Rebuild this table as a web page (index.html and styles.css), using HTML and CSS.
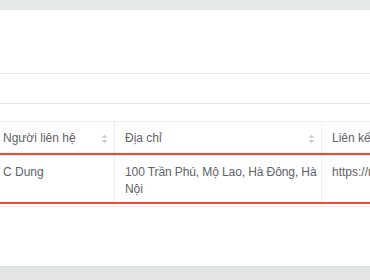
FILE: index.html
```html
<!DOCTYPE html>
<html lang="vi">
<head>
<meta charset="utf-8">
<link rel="stylesheet" href="styles.css">
</head>
<body>
<div class="page">
  <div class="topbar"></div>
  <div class="panel panel-tools"></div>
  <div class="panel panel-filter"></div>
  <div class="spacer"></div>
  <div class="table-wrap">
    <div class="grid">
      <div class="cell head first"><span>Người liên hệ</span><svg class="sort" width="7" height="10" viewBox="0 0 7 10"><path d="M0.5 4 L3.5 0.6 L6.5 4 Z"/><path d="M0.5 6 L3.5 9.4 L6.5 6 Z"/></svg></div>
      <div class="cell head"><span>Địa chỉ</span><svg class="sort" width="7" height="10" viewBox="0 0 7 10"><path d="M0.5 4 L3.5 0.6 L6.5 4 Z"/><path d="M0.5 6 L3.5 9.4 L6.5 6 Z"/></svg></div>
      <div class="cell head"><span>Liên kết</span></div>
      <div class="cell body first">C Dung</div>
      <div class="cell body addr">100 Trần Phú, Mộ Lao, Hà Đông, Hà Nội</div>
      <div class="cell body">https://readdy.ai</div>
    </div>
    <div class="highlight"></div>
  </div>
  <div class="footer"></div>
</div>
</body>
</html>
```
FILE: styles.css
```css
* { box-sizing: border-box; }
html, body { margin: 0; padding: 0; background: #fff; }
body {
  font-family: "Liberation Sans", Arial, sans-serif;
  font-size: 12px;
  color: #606266;
}
.page {
  width: 370px;
  height: 280px;
  display: flex;
  flex-direction: column;
  overflow: hidden;
}
.topbar { height: 10px; background: #e6e7e7; flex: none; }
.panel { flex: none; border-bottom: 1px solid #e4e5e8; }
.panel-tools { height: 64px; }
.panel-filter { height: 30px; }
.spacer { height: 17px; flex: none; }
.table-wrap {
  position: relative;
  flex: none;
  border-top: 1px solid #ebeef5;
}
.grid {
  display: grid;
  grid-template-columns: 115px 207px 200px;
  width: 522px;
}
.cell {
  border-right: 1px solid #ebeef5;
  border-bottom: 1px solid #ebeef5;
  padding: 8px 6px 8px 10px;
  line-height: 17px;
  white-space: normal;
}
.cell.first { padding-left: 3px; }
.head {
  display: flex;
  align-items: center;
  justify-content: space-between;
  color: #5f6166;
}
.body { padding-right: 4px; }
.addr { letter-spacing: -0.1px; }
.sort { fill: #cdd0d5; flex: none; }
.highlight {
  position: absolute;
  left: -4px;
  width: 530px;
  top: 31px;
  height: 51px;
  border-top: 2px solid #ee4a2f;
  border-bottom: 2px solid #ee4a2f;
  pointer-events: none;
}
.footer {
  margin-top: auto;
  height: 14px;
  flex: none;
  background: #e3e4e4;
  border-top: 1px solid #dcdddd;
}
```
